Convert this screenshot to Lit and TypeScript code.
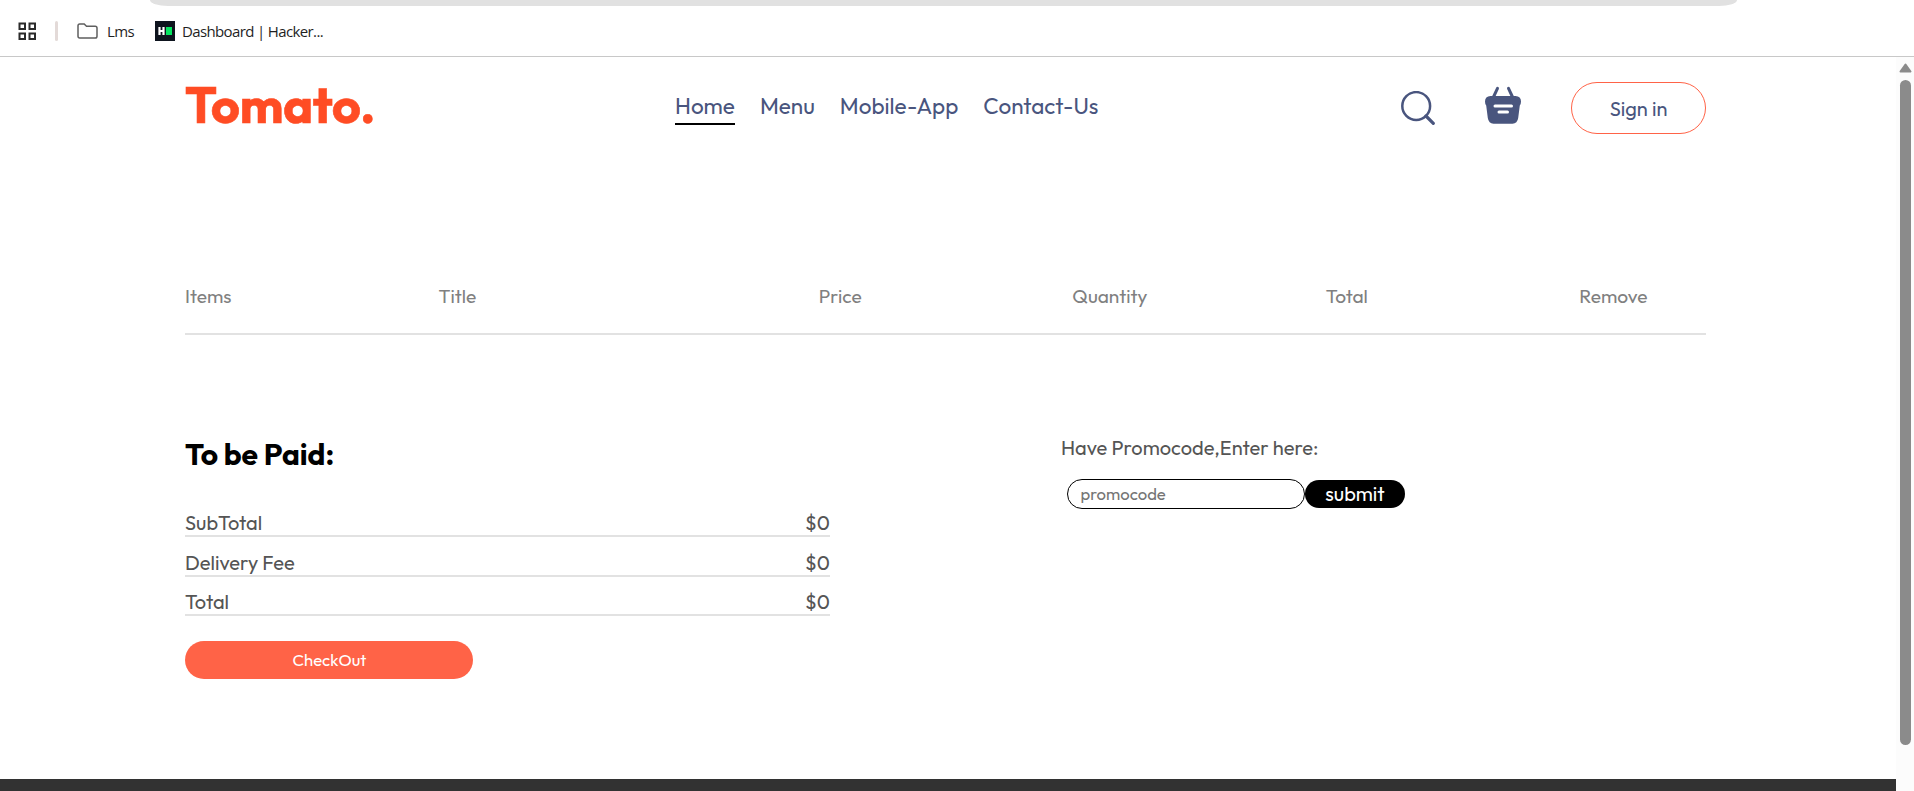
import { LitElement, html, css } from "lit";
import { customElement, property } from "lit/decorators.js";

/** A single line of text whose tracking is adjusted to occupy a set width. */
@customElement("fit-label")
class FitLabel extends LitElement {
  @property({ type: Number }) width = 0;
  @property() text = "";

  static styles = css`
    :host { display: inline-block; white-space: pre; }
    .text { display: inline-block; }
  `;

  updated() {
    const el = this.renderRoot.querySelector(".text") as HTMLElement;
    el.style.letterSpacing = "0px";
    const natural = el.getBoundingClientRect().width;
    el.style.letterSpacing = `${(this.width - natural) / this.text.length}px`;
  }

  render() {
    return html`<span class="text">${this.text}</span>`;
  }
}

const label = (text: string, width: number) =>
  html`<fit-label text=${text} .width=${width}></fit-label>`;

@customElement("browser-bar")
class BrowserBar extends LitElement {
  static styles = css`
    :host { display: block; flex: none; height: 56px; border-bottom: 1px solid #c8c8c8; font: 15px/20px "Open Sans", "Noto Sans", sans-serif; color: #1f1f1f; }
    .address { height: 6px; margin: 0 177px 0 150px; background: #e1e1e1; border-radius: 0 0 18px 18px / 0 0 6px 6px; }
    .marks { display: flex; align-items: center; height: 50px; padding-left: 18px; }
    .apps { width: 19px; height: 19px; }
    .sep { width: 3px; height: 20px; margin: 0 19px 0 18px; border-radius: 2px; background: #e3dad8; }
    .folder { width: 21px; height: 16px; margin-right: 9px; }
    .hr { width: 20px; height: 20px; margin: 0 7px 0 21px; }
    svg { display: block; flex: none; }
  `;
  render() {
    return html`
      <div class="address"></div>
      <div class="marks">
        <svg class="apps" viewBox="0 0 19 19" fill="none" stroke="#2b2b2b" stroke-width="2">
          <path d="M1.500 1.500h5.500v5.500h-5.500zM11.500 1.500h5.500v5.500h-5.500zM1.500 11.500h5.500v5.500h-5.500zM11.500 11.500h5.500v5.500h-5.500z" />
        </svg>
        <div class="sep"></div>
        <svg class="folder" viewBox="0 0 21 16" fill="none" stroke="#5f5f5f" stroke-width="1.500">
          <path d="M1 2.700Q1 1 2.700 1H7.200L9.500 3.200H18.200Q20 3.200 20 5V13.200Q20 15 18.200 15H2.700Q1 15 1 13.200Z" />
        </svg>
        ${label("Lms", 27)}
        <svg class="hr" viewBox="0 0 20 20">
          <rect width="20" height="20" fill="#0e141e" />
          <path d="M4.500 6v8M8.500 6v8M4 10h5" stroke="#fff" stroke-width="2.200" />
          <rect x="11" y="6" width="6" height="8" fill="#05e560" />
        </svg>
        ${label("Dashboard | Hacker...", 141)}
      </div>
    `;
  }
}

@customElement("site-nav")
class SiteNav extends LitElement {
  static styles = css`
    :host { display: grid; grid-template-columns: 490px auto 1fr; height: 52px; margin-top: 25px; color: #49557e; }
    .logo { color: #ff4c24; font-size: 50px; font-weight: 700; line-height: 45px; -webkit-text-stroke: 0.6px #ff4c24; }
    .menu { display: flex; gap: 25px; font-size: 22.5px; line-height: 28px; padding: 10px 0 0; margin: 0; list-style: none; }
    .item { height: 31px; }
    .active { border-bottom: 2px solid #000; }
    .tools { display: flex; justify-content: flex-end; }
    .search { width: 34px; height: 34px; margin: 9px 50px 0 0; }
    .basket { width: 36px; height: 38px; margin: 4px 50px 0 0; }
    .signin { box-sizing: border-box; width: 135px; height: 52px; padding: 0; border: 1px solid #ff6347; border-radius: 26px; background: transparent; color: #49557e; font: inherit; font-size: 20px; line-height: 52px; text-align: center; }
    svg { display: block; flex: none; }
  `;
  render() {
    const items = ["Home", "Menu", "Mobile-App", "Contact-Us"];
    return html`
      <div class="logo">${label("Tomato.", 190)}</div>
      <ul class="menu">
        ${items.map((name, i) => html`<li class="item ${i === 0 ? "active" : ""}">${name}</li>`)}
      </ul>
      <div class="tools">
        <svg class="search" viewBox="0 0 34 34" fill="none" stroke="#49557e">
          <circle cx="15.200" cy="15" r="13.900" stroke-width="2.500" />
          <path d="M25 25L32.300 32.300" stroke-width="3.200" stroke-linecap="round" />
        </svg>
        <svg class="basket" viewBox="0 0 36 38">
          <path d="M8 12L12.500 2.300M28 12L23.500 2.300" stroke="#49557e" stroke-width="3" stroke-linecap="round" />
          <path d="M5.500 10H30.500Q36 10.300 36 15.500Q36 18 34.800 19.500L33.200 32Q32.300 37.700 27.500 37.700H8.500Q3.700 37.700 2.800 32L1.200 19.500Q0 18 0 15.500Q0 10.300 5.500 10Z" fill="#49557e" />
          <path d="M10 20H26.500M14 26H22.500" stroke="#fff" stroke-width="3" stroke-linecap="round" />
        </svg>
        <button class="signin">Sign in</button>
      </div>
    `;
  }
}

@customElement("cart-page")
class CartPage extends LitElement {
  static styles = css`
    :host { display: block; }
    .head { display: grid; grid-template-columns: 1fr 1.5fr 1fr 1fr 1fr 0.5fr; height: 57px; margin-top: 142px; border-bottom: 2px solid #e2e2e2; color: #808080; font-size: 19.14px; line-height: 40px; }
    .bottom { display: flex; margin-top: 101px; color: #555; font-size: 20px; line-height: 24px; }
    .totals { width: 645px; margin-right: 231px; }
    .title { margin: 0 0 39px; color: #000; font-size: 30px; line-height: 36px; font-weight: 700; }
    .row { display: flex; justify-content: space-between; height: 24px; border-bottom: 2px solid #e2e2e2; }
    .row + .row { margin-top: 14px; }
    .row + .row + .row { margin-top: 13px; }
    .checkout { display: block; width: 288px; height: 38px; margin-top: 25px; padding: 0 0 0 1px; border: 0; border-radius: 19px; background: #ff6347; color: #fff; font: inherit; font-size: 16.667px; line-height: 38px; }
    .form { display: flex; align-items: center; margin: 19px 0 0 6px; }
    .code { box-sizing: border-box; width: 238px; height: 30px; padding: 0 12.5px 1px; border: 1px solid #000; border-radius: 15px; background: #fff; font: inherit; font-size: 16.667px; outline: 0; }
    .code::placeholder { color: #757575; opacity: 1; }
    .submit { width: 100px; height: 28px; padding: 0 0 1px; border: 0; border-radius: 14px; background: #000; color: #fff; font: inherit; font-size: 20px; line-height: 25px; }
  `;
  render() {
    const cols = ["Items", "Title", "Price", "Quantity", "Total", "Remove"];
    const rows = ["SubTotal", "Delivery Fee", "Total"];
    return html`
      <div class="head">${cols.map((t) => html`<span>${t}</span>`)}</div>
      <div class="bottom">
        <section class="totals">
          <h2 class="title">To be Paid:</h2>
          ${rows.map((t) => html`<div class="row"><span>${t}</span><span>$0</span></div>`)}
          <button class="checkout">CheckOut</button>
        </section>
        <section class="promo">
          <div>Have Promocode,Enter here:</div>
          <div class="form">
            <input class="code" type="text" placeholder="promocode" />
            <button class="submit">submit</button>
          </div>
        </section>
      </div>
    `;
  }
}

@customElement("app-root")
class AppRoot extends LitElement {
  static styles = css`
    :host { display: flex; flex-direction: column; height: 791px; overflow: hidden; background: #fff; font-family: Outfit, Lato, "Open Sans", sans-serif; }
    .view { flex: 1; display: flex; min-height: 0; }
    .site { flex: 1; display: flex; flex-direction: column; }
    .content { width: 1521px; margin-left: 185px; }
    .footer { height: 12px; margin-top: auto; background: #323232; }
    .scroll { width: 18px; box-sizing: border-box; padding: 6px 3px 0; background: #fcfcfc; }
    .arrow { display: block; width: 13px; height: 10px; }
    .thumb { width: 11px; height: 665px; margin: 7px 0 0 1px; border-radius: 6px; background: #8b8b8b; }
  `;
  render() {
    return html`
      <browser-bar></browser-bar>
      <div class="view">
        <main class="site">
          <div class="content">
            <site-nav></site-nav>
            <cart-page></cart-page>
          </div>
          <div class="footer"></div>
        </main>
        <div class="scroll">
          <svg class="arrow" viewBox="0 0 13 10"><path d="M6.500 1.500L11.500 8.500H1.500Z" fill="#8b8b8b" stroke="#8b8b8b" stroke-width="2" stroke-linejoin="round" /></svg>
          <div class="thumb"></div>
        </div>
      </div>
    `;
  }
}
